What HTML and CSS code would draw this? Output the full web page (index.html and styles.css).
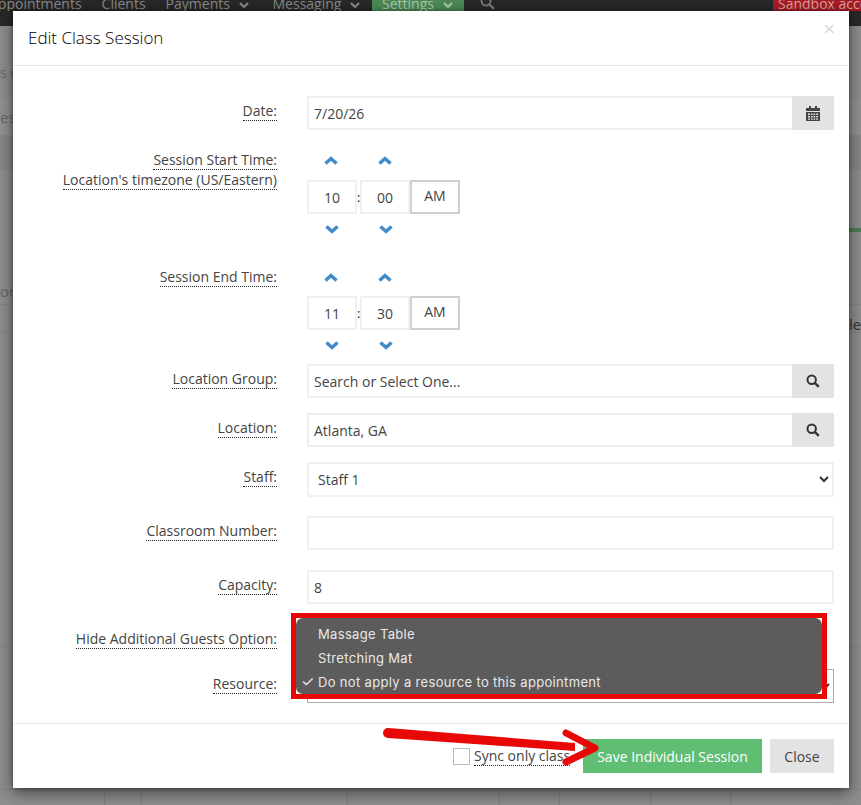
FILE: index.html
```html
<!DOCTYPE html>
<html lang="en">
<head>
    <meta charset="UTF-8" />
    <title>Edit Class Session</title>
    <link rel="stylesheet" href="styles.css">
</head>
<body>
    <nav class="topnav">
        <a>Appointments</a>
        <a>Clients</a>
        <a>Payments <svg class="caret" viewBox="0 0 10 7"><path d="M1 1l4 4 4-4"/></svg></a>
        <a class="nav-msg">Messaging <svg class="caret" viewBox="0 0 10 7"><path d="M1 1l4 4 4-4"/></svg></a>
        <a class="nav-active">Settings <svg class="caret" viewBox="0 0 10 7"><path d="M1 1l4 4 4-4"/></svg></a>
        <svg class="nav-search" width="15" height="15" viewBox="0 0 15 15"><circle cx="6" cy="6" r="4.500" fill="none" stroke="#777" stroke-width="2"/><path d="M9.500 9.500l4.500 4.500" stroke="#777" stroke-width="2.400"/></svg>
        <span class="sandbox">Sandbox account</span>
    </nav>

    <div class="behind">
        <div class="band band-top"><span class="peek peek-a">s o</span></div>
        <div class="band band-light"><span class="peek peek-b">es</span></div>
        <div class="band band-dark"></div>
        <div class="band band-mid"><span class="green-bar"></span><span class="peek peek-c">on</span></div>
        <div class="band band-row"><span class="peek peek-d">le</span></div>
        <div class="band band-line"></div>
        <div class="band band-rest"></div>
        <div class="band-table">
            <span></span><span></span><span></span><span></span><span></span><span></span><span></span>
        </div>
    </div>

    <div class="modal">
        <div class="modal-header">
            <h4>Edit Class Session</h4>
            <span class="close-x">&times;</span>
        </div>

        <div class="modal-body">
            <div class="row">
                <label><span>Date:</span></label>
                <div class="input-group">
                    <div class="field">7/20/26</div>
                    <div class="addon">
                        <svg width="14" height="15" viewBox="0 0 14 15"><path d="M3 0h2v2h4V0h2v2h3v3H0V2h3z" fill="#444"/><path d="M0 6h14v9H0zM2 7.500v1.500h2V7.500zM5 7.500v1.500h1.600V7.500zM7.600 7.500v1.500h1.600V7.500zM10.200 7.500v1.500H12V7.500zM2 10v1.500h2V10zM5 10v1.500h1.600V10zM7.600 10v1.500h1.600V10zM10.200 10v1.500H12V10zM2 12.400v1.400h2v-1.400zM5 12.400v1.400h1.600v-1.400zM7.600 12.400v1.400h1.600v-1.400zM10.200 12.400v1.400H12v-1.400z" fill="#444" fill-rule="evenodd"/></svg>
                    </div>
                </div>
            </div>

            <div class="row row-start">
                <label><span>Session Start Time:</span><br><span>Location's timezone (US/Eastern)</span></label>
                <div class="timepicker">
                    <div class="arrows">
                        <svg class="chev" viewBox="0 0 14 9"><path d="M1.500 7.500L7 2.500l5.500 5"/></svg>
                        <svg class="chev" viewBox="0 0 14 9"><path d="M1.500 7.500L7 2.500l5.500 5"/></svg>
                    </div>
                    <div class="time-boxes">
                        <div class="time-box">10</div><b>:</b><div class="time-box">00</div><div class="ampm">AM</div>
                    </div>
                    <div class="arrows arrows-down">
                        <svg class="chev" viewBox="0 0 14 9"><path d="M1.500 1.500L7 6.500l5.500-5"/></svg>
                        <svg class="chev" viewBox="0 0 14 9"><path d="M1.500 1.500L7 6.500l5.500-5"/></svg>
                    </div>
                </div>
            </div>

            <div class="row row-end">
                <label><span>Session End Time:</span></label>
                <div class="timepicker">
                    <div class="arrows">
                        <svg class="chev" viewBox="0 0 14 9"><path d="M1.500 7.500L7 2.500l5.500 5"/></svg>
                        <svg class="chev" viewBox="0 0 14 9"><path d="M1.500 7.500L7 2.500l5.500 5"/></svg>
                    </div>
                    <div class="time-boxes">
                        <div class="time-box">11</div><b>:</b><div class="time-box">30</div><div class="ampm">AM</div>
                    </div>
                    <div class="arrows arrows-down">
                        <svg class="chev" viewBox="0 0 14 9"><path d="M1.500 1.500L7 6.500l5.500-5"/></svg>
                        <svg class="chev" viewBox="0 0 14 9"><path d="M1.500 1.500L7 6.500l5.500-5"/></svg>
                    </div>
                </div>
            </div>

            <div class="row">
                <label><span>Location Group:</span></label>
                <div class="input-group">
                    <div class="field">Search or Select One...</div>
                    <div class="addon">
                        <svg width="14" height="14" viewBox="0 0 14 14"><circle cx="5.700" cy="5.700" r="4.200" fill="none" stroke="#333" stroke-width="2"/><path d="M8.800 8.800l4 4" stroke="#333" stroke-width="2.400"/></svg>
                    </div>
                </div>
            </div>

            <div class="row">
                <label><span>Location:</span></label>
                <div class="input-group">
                    <div class="field">Atlanta, GA</div>
                    <div class="addon">
                        <svg width="14" height="14" viewBox="0 0 14 14"><circle cx="5.700" cy="5.700" r="4.200" fill="none" stroke="#333" stroke-width="2"/><path d="M8.800 8.800l4 4" stroke="#333" stroke-width="2.400"/></svg>
                    </div>
                </div>
            </div>

            <div class="row row-staff">
                <label><span>Staff:</span></label>
                <div class="field field-select">
                    Staff 1
                    <svg width="10" height="7" viewBox="0 0 10 7"><path d="M1 1l4 4 4-4" fill="none" stroke="#333" stroke-width="2"/></svg>
                </div>
            </div>

            <div class="row row-class">
                <label><span>Classroom Number:</span></label>
                <div class="field"></div>
            </div>

            <div class="row row-class">
                <label><span>Capacity:</span></label>
                <div class="field">8</div>
            </div>

            <div class="row row-hide">
                <label><span>Hide Additional Guests Option:</span></label>
                <div></div>
            </div>

            <div class="row row-resource">
                <label><span>Resource:</span></label>
                <div class="field field-select field-dark">
                    <svg width="10" height="7" viewBox="0 0 10 7"><path d="M1 1l4 4 4-4" fill="none" stroke="#333" stroke-width="2"/></svg>
                </div>
            </div>

            <div class="highlight">
                <ul class="native-menu">
                    <li>Massage Table</li>
                    <li>Stretching Mat</li>
                    <li class="checked">Do not apply a resource to this appointment</li>
                </ul>
            </div>
        </div>

        <div class="modal-footer">
            <span class="sync-check"></span>
            <span class="sync-label">Sync only class</span>
            <button class="btn-save">Save Individual Session</button>
            <button class="btn-close">Close</button>
        </div>

        <svg class="red-arrow" width="230" height="50" viewBox="0 0 230 50">
            <path d="M8 3L195 18v8L8 13a5 5 0 0 1 0-10z" fill="#e80808"/>
            <path d="M186 8l29 15-29 14" fill="none" stroke="#e80808" stroke-width="7" stroke-linecap="round" stroke-linejoin="round"/>
        </svg>
    </div>
</body>
</html>
```

FILE: styles.css
```css
html, body {
    margin: 0;
    height: 805px;
    overflow: hidden;
}

body {
    font-family: "Open Sans", sans-serif;
    font-size: 14px;
    color: #444;
    background: #8e8e8e;
    position: relative;
}

.topnav {
    height: 26px;
    background: #282828;
    color: #8a8a8a;
    display: flex;
    align-items: flex-start;
    line-height: 7px;
    font-size: 14px;
    margin-left: -21px;
}

.topnav a {
    padding: 0 10px;
    height: 11px;
    overflow: hidden;
    white-space: nowrap;
}

.topnav .nav-msg {
    margin-left: 3px;
}

.topnav .nav-active {
    background: #4c8a55;
    color: #a9c9ad;
    margin-left: 1px;
}

.caret {
    width: 10px;
    height: 7px;
    margin-left: 5px;
    margin-right: 1px;
}

.caret path {
    fill: none;
    stroke: currentColor;
    stroke-width: 2;
}

.nav-search {
    margin: -5px 0 0 16px;
}

.sandbox {
    margin-left: auto;
    width: 88px;
    height: 11px;
    overflow: hidden;
    white-space: nowrap;
    background: #a81c24;
    color: #dca0a0;
    padding-left: 5px;
    box-sizing: border-box;
}

.band {
    position: relative;
    box-sizing: border-box;
}

.band-top { height: 73px; }
.band-light { height: 36px; background: #919191; }
.band-dark { height: 35px; background: #888; }
.band-mid { height: 135px; border-bottom: 1px solid #858585; }
.band-row { height: 28px; border-bottom: 1px solid #858585; }
.band-line { height: 314px; border-bottom: 1px solid #858585; }
.band-rest { height: 142px; }

.band-table {
    display: grid;
    grid-template-columns: 105px 37px 206px 152px 60px 91px 80px 1fr;
    height: 16px;
    border-top: 1px solid #858585;
}

.band-table span {
    border-right: 1px solid #808080;
}

.green-bar {
    position: absolute;
    right: 0;
    top: 58px;
    width: 12px;
    height: 4px;
    background: #4a7f55;
}

.peek {
    position: absolute;
    left: 0;
    color: #666;
    font-size: 15px;
    line-height: 20px;
}

.peek-a { top: 37px; font-size: 14px; }
.peek-b { top: 8px; }
.peek-c { top: 111px; }
.peek-d { top: 9px; left: 849px; color: #333; }

.modal {
    position: absolute;
    left: 13px;
    top: 11px;
    width: 836px;
    height: 777px;
    background: #fff;
    box-shadow: 0 5px 15px rgba(0,0,0,0.5), 0 0 4px rgba(0,0,0,0.4);
}

.modal-header {
    height: 54px;
    border-bottom: 1px solid #e5e5e5;
    position: relative;
}

.modal-header h4 {
    margin: 0;
    padding: 17px 15px 0;
    font-size: 17px;
    font-weight: 300;
    line-height: 20px;
    color: #000;
}

.close-x {
    position: absolute;
    right: 14px;
    top: 6px;
    font-size: 20px;
    color: #d8d8d8;
    line-height: 24px;
}

.modal-body {
    height: 657px;
    padding: 30px 15px 0 0;
    box-sizing: border-box;
    position: relative;
}

.row {
    display: grid;
    grid-template-columns: 264px 1fr;
    column-gap: 30px;
    margin-bottom: 15px;
}

.row label {
    text-align: right;
    padding-top: 5px;
    line-height: 20px;
}

.row label span {
    border-bottom: 1px dotted #222;
}

.input-group {
    display: flex;
    height: 34px;
}

.field {
    flex: 1;
    height: 34px;
    box-sizing: border-box;
    border: 2px solid #f0f0f0;
    padding: 0 5px;
    line-height: 32px;
    color: #444;
}

.input-group .field {
    border-right: none;
}

.addon {
    width: 42px;
    background: #e3e3e3;
    display: flex;
    align-items: center;
    justify-content: center;
}

.row-start {
    margin-bottom: 18px;
}

.row-end {
    margin-bottom: 4px;
}

.arrows {
    display: flex;
    height: 30px;
    align-items: center;
    padding-left: 17px;
    gap: 40px;
    margin-bottom: 5px;
}

.row-end .arrows {
    margin-bottom: 4px;
}

.row-end .arrows-down,
.arrows-down {
    margin-bottom: 0;
    padding-left: 18px;
}

.chev {
    width: 14px;
    height: 9px;
}

.chev path {
    fill: none;
    stroke: #428bca;
    stroke-width: 3.500;
}

.time-boxes {
    display: flex;
    align-items: center;
}

.time-boxes b {
    width: 3px;
    font-weight: 400;
    font-size: 13px;
    color: #222;
    text-align: center;
}

.time-box {
    width: 50px;
    height: 34px;
    box-sizing: border-box;
    border: 2px solid #f0f0f0;
    text-align: center;
    line-height: 32px;
}

.ampm {
    width: 50px;
    height: 34px;
    box-sizing: border-box;
    border: 2px solid #d0d0d0;
    text-align: center;
    line-height: 28px;
}

.field-select {
    display: flex;
    align-items: center;
    justify-content: space-between;
    padding: 0 3px 0 9px;
    line-height: normal;
    height: 35px;
}

.row-staff {
    margin-bottom: 19px;
}

.row-class {
    margin-bottom: 20px;
}

.row-hide {
    height: 25px;
    margin-bottom: 20px;
}

.row-resource {
    height: 20px;
}

.field-dark {
    position: absolute;
    left: 294px;
    right: 15px;
    top: 603px;
    border: 1px solid #aaa;
    height: 34px;
    justify-content: flex-end;
}

.highlight {
    position: absolute;
    left: 278px;
    top: 547px;
    width: 536px;
    height: 86px;
    box-sizing: border-box;
    border: 5px solid #e80808;
    background: #fff;
}

.native-menu {
    list-style: none;
    margin: 0;
    padding: 4px 0;
    height: 76px;
    box-sizing: border-box;
    background: #5c5c5c;
    border-radius: 7px;
    color: #e8e8e8;
    font-family: "Inter", sans-serif;
    font-size: 13px;
    font-weight: 400;
    letter-spacing: 0.33px;
}

.native-menu li {
    height: 24px;
    line-height: 24px;
    padding-left: 22px;
    position: relative;
}

.checked::before {
    content: "✓";
    position: absolute;
    left: 5px;
    font-size: 15px;
}

.modal-footer {
    height: 65px;
    border-top: 1px solid #e5e5e5;
    box-sizing: border-box;
    display: flex;
    align-items: center;
    justify-content: flex-end;
    padding: 0 15px 0 0;
}

.sync-check {
    width: 17px;
    height: 17px;
    box-sizing: border-box;
    border: 1px solid #bbb;
    margin-right: 4px;
}

.sync-label {
    border-bottom: 1px dotted #222;
    line-height: 18px;
    width: 96px;
    overflow: hidden;
    white-space: nowrap;
    margin-right: 13px;
}

.modal-footer button {
    border: none;
    height: 34px;
    font-family: "Open Sans", sans-serif;
    font-size: 14px;
    padding: 0;
}

.btn-save {
    width: 179px;
    background: #5fbd74;
    color: #fff;
    margin-right: 8px;
}

.btn-close {
    width: 64px;
    background: #e3e3e3;
    color: #444;
}

.red-arrow {
    position: absolute;
    left: 367px;
    top: 714px;
}
```
